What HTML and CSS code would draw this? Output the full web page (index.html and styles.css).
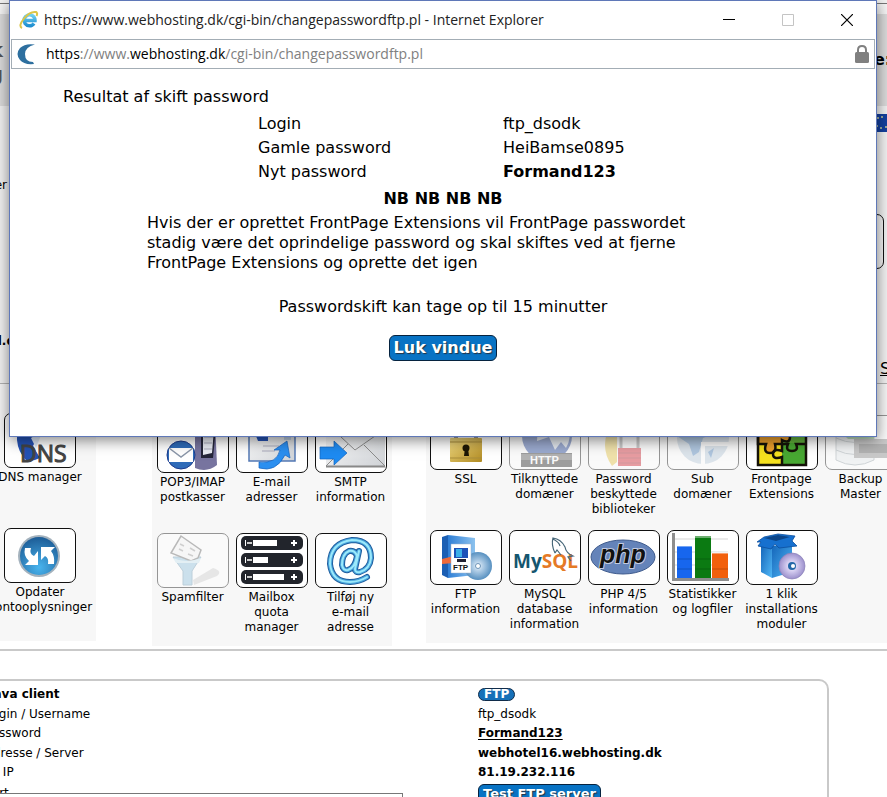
FILE: index.html
```html
<!DOCTYPE html>
<html lang="da">
<head>
<meta charset="utf-8">
<title>Webhosting kontrolpanel</title>
<link rel="stylesheet" href="styles.css">
</head>
<body>
<svg class="defs" width="0" height="0" aria-hidden="true">
  <defs>
    <linearGradient id="box" x1="0" y1="0" x2="1" y2="0"><stop offset="0" stop-color="#2f7fd6"/><stop offset="1" stop-color="#8cc2ee"/></linearGradient>
    <linearGradient id="paper" x1="0" y1="0" x2="1" y2="1"><stop offset="0" stop-color="#ffffff"/><stop offset="1" stop-color="#cfd2d6"/></linearGradient>
    <linearGradient id="gold" x1="0" y1="0" x2="1" y2="1"><stop offset="0" stop-color="#f3dc83"/><stop offset="1" stop-color="#b08a22"/></linearGradient>
    <linearGradient id="crate" x1="0" y1="0" x2="1" y2="1"><stop offset="0" stop-color="#1263b8"/><stop offset="1" stop-color="#52b8f6"/></linearGradient>
    <linearGradient id="ie" x1="0" y1="0" x2="0" y2="1"><stop offset="0" stop-color="#6fd0f2"/><stop offset="1" stop-color="#1f8fd0"/></linearGradient>
    <radialGradient id="ball" cx=".5" cy=".8" r=".8"><stop offset="0" stop-color="#48b4ee"/><stop offset="1" stop-color="#1d5c96"/></radialGradient>
    <radialGradient id="disc"><stop offset="0" stop-color="#ffffff"/><stop offset=".3" stop-color="#b9d3ea"/><stop offset="1" stop-color="#5790c0"/></radialGradient>
    <radialGradient id="disc2"><stop offset="0" stop-color="#ffffff"/><stop offset=".4" stop-color="#d5cdf0"/><stop offset="1" stop-color="#9c90cc"/></radialGradient>
  </defs>
</svg>
<div class="page">
  <header class="top">
    <div class="band">
      <div class="edge-left logo"><span>k</span><span>g</span></div>
      <strong class="band-title">e:</strong>
    </div>
    <div class="account">
      <div class="edge-left names"><span>Bruger</span><b>l.d</b></div>
      <div class="tools">
        <svg class="flag" viewBox="0 0 28 18" width="28" height="18" aria-hidden="true"><rect width="28" height="18" fill="#1440a0"/><g fill="#c9cf9a"><circle cx="10" cy="4" r="1"/><circle cx="14" cy="3" r="1"/><circle cx="8" cy="8" r="1"/><circle cx="9" cy="12" r="1"/><circle cx="13" cy="14" r="1"/><circle cx="18" cy="13" r="1"/></g></svg>
        <span class="tile side-tile"></span>
        <a class="side-link" href="#">S</a>
      </div>
    </div>
  </header>

  <main>
    <nav class="panels">
      <section class="panel panel-dns">
        <a class="item" href="#"><span class="tile"><svg viewBox="0 0 70 53"><path d="M12 12q12-14 24 4l-4 8-4 8 7 12q-8 4-14 2-8-8-9-20z" fill="#2452b4"/><path d="M26 24l12-8-7 18z" fill="#dfe9f8"/><text x="15" y="48" class="t-dns">DNS</text></svg></span>DNS manager</a>
        <a class="item" href="#"><span class="tile"><svg viewBox="0 0 70 53"><circle cx="34" cy="27" r="21" fill="#a4b2bd"/><circle cx="34" cy="27" r="19" fill="url(#ball)"/><path d="M20 19h6q-2 6 3 8l4-5v14H20l4-4q-6-5-4-13zM36 18h14l-4 4q4 5 3 13h-6q1-6-3-8l-4 4z" fill="#fff"/></svg></span>Opdater Kontooplysninger</a>
      </section>

      <section class="panel panel-mail">
        <a class="item" href="#"><span class="tile"><svg viewBox="0 0 70 53"><path d="M37 2h20l2 44q-10 8-22 3z" fill="#77749f"/><path d="M43 8h15l-3 31H43z" fill="#25263a"/><path d="M45 10h11l-2 24-9 2z" fill="#e9ecf4"/><path d="M46 18h9M46 24h8M46 30h8" stroke="#aab"/><circle cx="23" cy="36" r="14" fill="#2e6bb8" stroke="#1c3b8c"/><path d="M11 29h24v14H11z" fill="#fff"/><path d="M11 29l12 9 12-9" fill="none" stroke="#8a96a8" stroke-width="1.5"/></svg></span>POP3/IMAP postkasser</a>
        <a class="item" href="#"><span class="tile"><svg viewBox="0 0 70 53"><path d="M12 6h46v36H12z" fill="url(#paper)" stroke="#5378b4" stroke-width="1.5"/><path d="M17 12h14v10H21z" fill="#2452b4"/><rect x="47" y="14" width="7" height="7" fill="#b8c9dd"/><path d="M26 27h16M25 32h13" stroke="#aab"/><path d="M22 43q18 2 21-12h-6l13-9 3 17-5-3q-9 18-26 13z" fill="#2b8ff0" stroke="#1763bd" stroke-width=".7"/></svg></span>E-mail adresser</a>
        <a class="item" href="#"><span class="tile"><svg viewBox="0 0 70 53"><path d="M10 4h59v43H10z" fill="url(#paper)"/><path d="M10 4l29 27L69 10M10 47l22-22M69 47L48 26" fill="none" stroke="#8c8c8c"/><path d="M10 47.500h59" stroke="#888" stroke-width="2"/><path d="M4 28h14v-6l13 12-13 12v-6H4z" fill="#1e8bf2" stroke="#1566bd" stroke-width=".7"/></svg></span>SMTP information</a>
        <a class="item off" href="#"><span class="tile"><svg viewBox="0 0 70 53"><path d="M35 46l20-12q10 3 4 8L36 51z" fill="#d0d0d0"/><path d="M15 23h28l-9 14v14h-9V37z" fill="#8fc1dd" stroke="#6f9ab4"/><path d="M23 2l20 14-3 8-7 3-20-8z" fill="#f6f6f6" stroke="#666" stroke-width="1.500"/><path d="M22 10l4 2M21 15l4 2M32 14l5 3M30 20l5 2" stroke="#999" stroke-width="1.500"/><path d="M15 24q13 6 28 0l-2 5H18z" fill="#c9e5f2"/></svg></span>Spamfilter</a>
        <a class="item" href="#"><span class="tile"><svg viewBox="0 0 70 53"><g fill="#22252c"><rect x="4" y="2" width="62" height="14" rx="5"/><rect x="4" y="19" width="62" height="14" rx="5"/><rect x="4" y="36" width="62" height="14" rx="5"/></g><g fill="#fff"><path d="M8 6h32v6H8zM8 23h23v6H8zM8 40h39v6H8z"/><path d="M56 6h2v2h2v2h-2v2h-2v-2h-2V8h2zM56 23h2v2h2v2h-2v2h-2v-2h-2v-2h2zM56 40h2v2h2v2h-2v2h-2v-2h-2v-2h2z"/></g><path d="M9 6h7v6H9zM9 23h7v6H9zM9 40h7v6H9z" fill="#22252c"/><path d="M10 9h5M10 26h5M10 43h5" stroke="#ccc" stroke-width="2"/></svg></span>Mailbox quota manager</a>
        <a class="item" href="#"><span class="tile"><svg viewBox="0 0 70 53"><g fill="none" stroke-linecap="round"><path d="M43 17l-4 18q0 4 5 3 10-3 11-14Q55 6 36 6 14 9 14 30q2 18 20 18 9 0 17-5M41 22q-2-6-8-5-7 3-7 14 1 6 6 5 7-2 9-14" stroke="#1f5d9e" stroke-width="6"/><path d="M43 17l-4 18q0 4 5 3 10-3 11-14Q55 6 36 6 14 9 14 30q2 18 20 18 9 0 17-5M41 22q-2-6-8-5-7 3-7 14 1 6 6 5 7-2 9-14" stroke="#4aa6dc" stroke-width="4"/><path d="M43 17l-4 18q0 4 5 3 10-3 11-14Q55 6 36 6 14 9 14 30q2 18 20 18 9 0 17-5M41 22q-2-6-8-5-7 3-7 14 1 6 6 5 7-2 9-14" stroke="#9be9fb" stroke-width="2"/></g></svg></span>Tilføj ny<br>e-mail adresse</a>
      </section>

      <section class="panel panel-site">
        <a class="item" href="#"><span class="tile"><svg viewBox="0 0 70 53"><path d="M25 24V14q10-14 20 0v10" fill="none" stroke="#999" stroke-width="4"/><rect x="19" y="22" width="32" height="24" rx="1" fill="url(#gold)"/><path d="M19 26h32M19 42h32" stroke="#a98d3c"/><circle cx="35" cy="32" r="3.500" fill="#1d1705"/><path d="M34 32h3l1 8h-5z" fill="#1d1705"/></svg></span>SSL</a>
        <a class="item off" href="#"><span class="tile"><svg viewBox="0 0 70 53"><circle cx="37" cy="20" r="25" fill="#1c3f98"/><path d="M28 8q12-4 20 4l10-2q4 12-2 22l-5-6-6 8-6-13-12 4z" fill="#c9d4e4"/><path d="M11 37h51v14H11z" fill="#222"/><path d="M11 38h51v6H11z" fill="#555"/><text x="20" y="48" class="t-http">HTTP</text></svg></span>Tilknyttede domæner</a>
        <a class="item off" href="#"><span class="tile"><svg viewBox="0 0 70 53"><path d="M23 5q-14 25 0 45l5-4V6z" fill="#e6c441"/><path d="M32 34V18q8-10 17 0v16" fill="none" stroke="#888" stroke-width="3"/><rect x="29" y="32" width="23" height="18" fill="#d2202c"/><path d="M29 37h23M29 42h23M29 47h23" stroke="#a01824"/></svg></span>Password beskyttede biblioteker</a>
        <a class="item off" href="#"><span class="tile"><svg viewBox="0 0 70 53"><circle cx="35" cy="22" r="26" fill="#b9cbdc"/><path d="M9 20q1-10 12-16h18q10 8 6 14l-10 4-4 14-6 4-4-12z" fill="#4a82bd"/><path d="M40 36l6-4-3 10z" fill="#4a82bd"/><path d="M35 54V28h26" fill="none" stroke="#fff" stroke-width="4"/></svg></span>Sub domæner</a>
        <a class="item" href="#"><span class="tile"><svg viewBox="0 0 70 53"><path d="M11 4h24v23H11z" fill="#e5612c"/><path d="M35 4h24v23H35z" fill="#62b13c"/><path d="M11 27h24v22H11z" fill="#f4e01e"/><path d="M35 27h24v22H35z" fill="#48a832"/><g stroke="#151208" stroke-width="2.500"><path d="M35 5v13q8-4 8 3t-8 3v4h-7q2 9-5 9t-4-9h-8V5z" fill="#eda02c"/><path d="M35 28h6q-3 7 4 7t4-7h10M35 28v7q-9-3-9 3t9 3v8M11 4h48v45H11z" fill="none"/></g></svg></span>Frontpage Extensions</a>
        <a class="item off" href="#"><span class="tile"><svg viewBox="0 0 70 53"><path d="M10 8h38v36q-19 10-38 0z" fill="#e8ecef" stroke="#9aa5ab"/><path d="M10 22q19 9 38 0M10 34q19 9 38 0" fill="none" stroke="#9aa5ab"/><path d="M14 15l20-9v5h14v12H22z" fill="#6cb96c"/><path d="M28 23h40v19H28z" fill="#888"/><path d="M33 28h28v9H33z" fill="#555"/></svg></span>Backup Master</a>
        <a class="item" href="#"><span class="tile"><svg viewBox="0 0 70 53"><path d="M11 6l6-2v43l-6-3z" fill="#1b5fb4"/><path d="M17 4l27 3v37l-27 3z" fill="url(#box)"/><path d="M11 28l12-3v7l-12 1z" fill="#ef6a3a"/><circle cx="47" cy="35" r="14" fill="url(#disc)"/><circle cx="47" cy="35" r="2.500" fill="#fff" stroke="#6b93b8"/><path d="M20 13h20v29H20z" fill="#fff" stroke="#9ab2cc" stroke-width=".5"/><path d="M23 17h14v10H23z" fill="#1c52b8"/><path d="M25 18h6v8h-6z" fill="#3cb0e8"/><path d="M26 28h9v3h-9z" fill="#223"/><text x="22" y="39" class="t-ftp">FTP</text></svg></span>FTP information</a>
        <a class="item" href="#"><span class="tile"><svg viewBox="0 0 70 53"><text x="3" y="37" class="t-mysql"><tspan fill="#15566f">My</tspan><tspan fill="#e57a26">SQL</tspan></text><path d="M45 22q-4-8-2-15 8 1 12 9 1 6 8 9l-5 1 3 4M45 22l2-3 4 5M43 8q6 3 7 7" fill="none" stroke="#456577" stroke-width="1.200"/></svg></span>MySQL database information</a>
        <a class="item" href="#"><span class="tile"><svg viewBox="0 0 70 53"><ellipse cx="34" cy="26" rx="32" ry="17" fill="#6483b9" stroke="#3f5b8d"/><text x="34" y="32" text-anchor="middle" class="t-php">php</text></svg></span>PHP 4/5 information</a>
        <a class="item" href="#"><span class="tile"><svg viewBox="0 0 70 53"><path d="M6 8h54M6 21h54M6 34h54" stroke="#d5d5d5"/><path d="M4 2h3v45h54v3H4z" fill="#8e8e8e"/><path d="M9 15h15v32H9z" fill="#1766ee"/><path d="M27 5h16v42H27z" fill="#0b7a12"/><path d="M44 22h16v25H44z" fill="#f2600c"/><path d="M9 15h15M27 6h16M44 22h16" stroke="#fff" stroke-opacity=".4" stroke-width="2"/><path d="M9 28h15M9 38h15M27 28h16M27 38h16M44 38h16" stroke="#000" stroke-opacity=".2"/></svg></span>Statistikker og logfiler</a>
        <a class="item" href="#"><span class="tile"><svg viewBox="0 0 70 53"><path d="M14 12l11 3v32l-11-6z" fill="url(#crate)"/><path d="M25 15l20-3v29l-20 6z" fill="url(#crate)"/><path d="M10 11l7-5 14-3 17 2-3 5 5 5-18 2-4-4-4 5-13-3 3-4z" fill="#1670cf" stroke="#0d4f9e" stroke-width=".8"/><path d="M17 7l14-3 12 2-14 4z" fill="#0c4588"/><circle cx="45" cy="35" r="13" fill="url(#disc2)" stroke="#8d83b8" stroke-width=".7"/><circle cx="45" cy="35" r="4" fill="#2467a8"/><circle cx="46" cy="35" r="2" fill="#fff"/></svg></span>1 klik installations moduler</a>
      </section>
    </nav>

    <section class="client">
      <table class="info">
        <tbody>
          <tr class="head"><th scope="row">Java client</th><td><button class="pill" type="button">FTP</button></td></tr>
          <tr><th scope="row">Login / Username</th><td>ftp_dsodk</td></tr>
          <tr><th scope="row">Password</th><td><a class="strong-link" href="#">Formand123</a></td></tr>
          <tr><th scope="row">Adresse / Server</th><td><b>webhotel16.webhosting.dk</b></td></tr>
          <tr><th scope="row">På IP</th><td><b>81.19.232.116</b></td></tr>
          <tr class="last"><th scope="row"><label for="log">Port</label><textarea id="log" rows="3"></textarea></th><td><button class="blue-button small" type="button">Test FTP server</button></td></tr>
        </tbody>
      </table>
    </section>
  </main>
</div>

<div class="popup" role="dialog" aria-label="Resultat af skift password">
  <div class="titlebar">
    <svg viewBox="0 0 20 20" width="20" height="20" aria-hidden="true"><path d="M5 10.500H16A5.500 5.500 0 1 0 15 13.500" fill="none" stroke="url(#ie)" stroke-width="3.500"/><path d="M3 18Q-1 16 5 8.500T17 2q2 1 .5 4" fill="none" stroke="#dcc548" stroke-width="2"/></svg>
    <span class="title">https://www.webhosting.dk/cgi-bin/changepasswordftp.pl - Internet Explorer</span>
    <div class="controls">
      <button type="button" aria-label="Minimer"><svg viewBox="0 0 12 12" width="12" height="12"><path d="M0 5.500h12" stroke="#000"/></svg></button>
      <button type="button" aria-label="Maksimer" disabled><svg viewBox="0 0 12 12" width="12" height="12"><path d="M.5.5h11v11H.5z" fill="none" stroke="#c4c4c4"/></svg></button>
      <button type="button" aria-label="Luk"><svg viewBox="0 0 12 12" width="12" height="12"><path d="M0 0l12 12M12 0L0 12" stroke="#000" stroke-width="1.200"/></svg></button>
    </div>
  </div>
  <div class="address">
    <svg viewBox="0 0 20 22" width="20" height="22" aria-hidden="true"><path d="M19 1.500Q9 0 4 5-1 11 4 17q4 5 14 4l-1-2q-8 0-8-8 0-7 10-9.500z" fill="#2d6f9f"/></svg>
    <span class="url">https<i>://www.</i>webhosting.dk<i>/cgi-bin/changepasswordftp.pl</i></span>
    <svg viewBox="0 0 14 18" width="14" height="18" aria-hidden="true"><path d="M3 9V5q0-4 4-4t4 4v4" fill="none" stroke="#808080" stroke-width="2"/><rect y="7" width="14" height="11" rx="1.500" fill="#808080"/></svg>
  </div>
  <div class="result">
    <h1>Resultat af skift password</h1>
    <table class="credentials">
      <tbody>
        <tr><th scope="row">Login</th><td>ftp_dsodk</td></tr>
        <tr><th scope="row">Gamle password</th><td>HeiBamse0895</td></tr>
        <tr><th scope="row">Nyt password</th><td><b>Formand123</b></td></tr>
      </tbody>
    </table>
    <strong class="nb">NB NB NB NB</strong>
    <p class="note">Hvis der er oprettet FrontPage Extensions vil FrontPage passwordet stadig være det oprindelige password og skal skiftes ved at fjerne FrontPage Extensions og oprette det igen</p>
    <p class="wait">Passwordskift kan tage op til 15 minutter</p>
    <button class="blue-button" type="button">Luk vindue</button>
  </div>
</div>
</body>
</html>
```
FILE: styles.css
```css
* { box-sizing: border-box; }

body {
  margin: 0;
  background: #fff;
  color: #000;
  font: 12px/15px Verdana, "DejaVu Sans", sans-serif;
}

button { font-family: inherit; cursor: pointer; }
a { color: inherit; }
.defs { position: absolute; }

.page {
  height: 100vh;
  overflow: hidden;
}

/* Top area */
.top {
  padding-top: 3px;
  border-bottom: 1px solid #b4b4b4;
  background: #f3f3f3;
}
.band {
  display: flex;
  justify-content: space-between;
  height: 103px;
  border-top: 1px solid #777;
  background: linear-gradient(#f6f6f6 10px, #dcdcdc 10px);
}
.edge-left {
  display: flex;
  flex-direction: column;
  align-items: flex-end;
}
.logo {
  width: 3px;
  padding-top: 34px;
  color: #555;
  font-size: 20px;
  font-weight: bold;
  line-height: 24px;
}
.band-title {
  width: 13px;
  padding-top: 46px;
  font-size: 16px;
  line-height: 20px;
}
.account {
  display: flex;
  justify-content: space-between;
  height: 277px;
}
.names {
  width: 7px;
  padding-top: 72px;
  gap: 141px;
}
.names b { margin-right: -8px; }
.tools {
  display: flex;
  flex-direction: column;
  width: 75px;
  padding-top: 8px;
}
.flag { margin-left: 56px; }
.side-link {
  margin-top: 90px;
  padding-left: 68px;
  font-size: 16px;
  line-height: 20px;
}

/* Icon panels */
.panels {
  display: flex;
  align-items: flex-start;
  padding-bottom: 3px;
  border-bottom: 2px solid #c9c9c9;
}
.panel {
  display: grid;
  grid-template-columns: repeat(3, 79px);
  grid-auto-rows: 102px;
  row-gap: 13px;
  padding-bottom: 11px;
  background: #f7f7f7;
}
.panel-dns {
  grid-template-columns: 110px;
  margin-left: -15px;
  padding-top: 29px;
  padding-right: 1px;
}
.panel-mail {
  margin-left: 56px;
  padding-top: 34px;
  padding-left: 1px;
  padding-right: 2px;
}
.panel-site {
  flex: 1;
  grid-template-columns: repeat(6, 79px);
  margin-left: 34px;
  padding-top: 31px;
}
.panel-site .item:nth-child(7) { grid-column: 1; }
.item {
  text-align: center;
  text-decoration: none;
}
.tile {
  display: block;
  width: 72px;
  height: 55px;
  margin: 0 auto 2px;
  overflow: hidden;
  border: 1px solid #111;
  border-radius: 7px;
  background: #fff;
}
.side-tile { margin: 82px 0 0; background: none; }
.tile svg {
  display: block;
  width: 70px;
  height: 53px;
}
.off .tile { opacity: .42; }
.t-dns { font: 23px "Open Sans", sans-serif; fill: #444; stroke: #444; }
.t-http { font: bold 11px "Liberation Sans", sans-serif; fill: #fff; }
.t-ftp { font: bold 8px "Liberation Sans", sans-serif; fill: #111; }
.t-mysql { font: bold 19px "Open Sans", sans-serif; }
.t-php {
  font: italic bold 25px "Liberation Sans", sans-serif;
  fill: #111;
  stroke: #c3cbe0;
  stroke-width: 2px;
  paint-order: stroke;
}

/* Client details */
.client {
  margin: 28px 58px 0 -24px;
  padding: 4px 7px;
  border: 2px solid #c9c9c9;
  border-radius: 10px;
}
.info {
  width: 100%;
  border-collapse: collapse;
  table-layout: fixed;
}
.info th {
  width: 493px;
  padding: 0;
  font-weight: normal;
  text-align: left;
  vertical-align: middle;
}
.info td { padding: 0; }
.info tr { height: 20px; line-height: 19px; }
.info tr:nth-child(odd) { height: 19px; }
.info .head th { padding-left: 4px; font-weight: bold; }
.info .last th, .info .last td { vertical-align: top; padding-top: 2px; }
.info label { display: block; height: 9px; overflow: hidden; }
.info textarea {
  display: block;
  width: 418px;
  border: 1px solid #777;
  resize: none;
}
.strong-link { font-weight: bold; text-underline-offset: 2px; }

.pill {
  display: block;
  padding: 0 5px;
  border: 1px solid #102c4a;
  border-radius: 7px;
  background: #1670b8;
  color: #fff;
  font-size: 12px;
  font-weight: bold;
  line-height: 11px;
}
.blue-button {
  padding: 0 4px;
  border: 1px solid #06233f;
  border-radius: 6px;
  background: #0873c4;
  color: #fff;
  font-size: 16px;
  font-weight: bold;
  line-height: 24px;
  text-shadow: 1px 1px 1px #234;
}
.blue-button.small {
  font-size: 13px;
  line-height: 18px;
}

/* Popup window */
.popup {
  position: absolute;
  top: 0;
  left: 9px;
  right: 10px;
  border: 1px solid #5f78b8;
  background: #fff;
  box-shadow: 0 3px 14px rgba(0, 0, 0, .5);
}
.titlebar {
  display: flex;
  align-items: center;
  height: 38px;
  padding-left: 9px;
  font: 14px/20px "Open Sans", "Segoe UI", sans-serif;
  color: #222;
}
.title { margin-left: 5px; }
.controls {
  display: flex;
  margin-left: auto;
}
.controls button {
  display: flex;
  align-items: center;
  justify-content: center;
  width: 59px;
  height: 36px;
  padding: 0;
  border: 0;
  background: none;
}
.address {
  display: flex;
  align-items: center;
  height: 30px;
  margin: 0 1px;
  padding: 0 5px 0 4px;
  border: 1px solid #a3adb5;
  font: 14px/20px "Open Sans", "Segoe UI", sans-serif;
}
.url { flex: 1; margin-left: 10px; }
.url i { color: #808080; font-style: normal; }
.result {
  display: flex;
  flex-direction: column;
  align-items: center;
  padding: 18px 53px 75px;
  font-size: 16px;
  line-height: 20px;
}
.result h1 {
  align-self: stretch;
  margin: 0 0 5px;
  font-size: 16px;
  font-weight: normal;
}
.credentials {
  width: 370px;
  border-collapse: collapse;
}
.credentials th, .credentials td {
  padding: 2px 0;
  font-weight: normal;
  text-align: left;
}
.credentials th { width: 245px; }
.nb { margin-top: 5px; }
.note {
  width: 592px;
  max-width: 100%;
  margin: 4px 0 0;
  padding-right: 40px;
}
.wait { margin: 24px 0 18px; }
```
